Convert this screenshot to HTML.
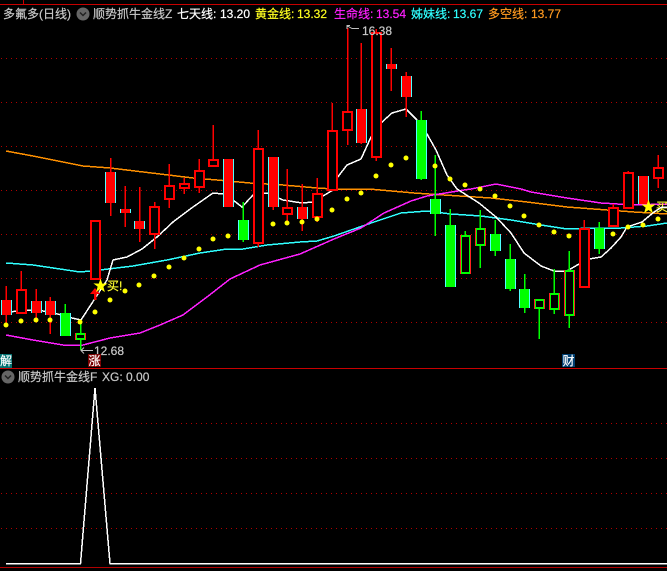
<!DOCTYPE html>
<html><head><meta charset="utf-8"><style>
html,body{margin:0;padding:0;background:#000;width:667px;height:571px;overflow:hidden}
svg{display:block;position:absolute;left:0;top:0}
text{font-family:"Liberation Sans","WenQuanYi Zen Hei","Noto Sans CJK SC",sans-serif;font-size:12px;color:#c8c8c8;fill:currentColor;stroke:currentColor;stroke-width:.2}
.c{shape-rendering:crispEdges;fill:none}
.l{stroke-width:1.5}
.g{stroke:#b00000;stroke-width:1;stroke-dasharray:1 4}
</style></head><body>
<svg width="667" height="571" viewBox="0 0 667 571">
<rect width="667" height="571" fill="#000"/>
<path class="c g" d="M1 58.5H667M1 102.5H667M1 146.5H667M1 190.5H667M1 234.5H667M1 278.5H667M1 322.5H667M1 423.5H667M1 458.5H667M1 493.5H667M1 528.5H667"/>
<path class="c" stroke="#c80000" stroke-width="1" d="M0 4.5H667M23.5 0V4M0 368.5H667"/>
<path class="c" stroke="#b00000" stroke-width="1" d="M0 567.5H667"/>

<path class="c l" stroke="#ff9000" d="M6 151L33 156L83 166L110 168L160 174L193 178L217 180L250 183L283 185L317 188L334 189L369 189L414 193L444 195L491 198L527 202L567 207L607 210L634 212L667 214"/>
<path class="c l" stroke="#30ffff" d="M6 263L33 265L60 269L80 272L100 270L133 266L167 260L200 253L227 249L243 249L267 245L300 242L317 241L334 236L354 229L374 222L401 213L427 211L451 214L481 216L511 220L541 225L567 229L594 228L621 228L647 226L667 223"/>
<path class="c l" stroke="#ff20ff" d="M6 335L33 340L63 345L83 345L110 338L140 333L160 325L183 315L207 297L230 279L260 265L300 254L334 239L361 228L384 213L411 201L427 196L464 190L471 189L496 184L521 189L531 192L567 198L601 203L634 205L667 204"/>
<path class="c l" stroke="#fff" d="M11 312L21 310L36 310L50 312L65 316L72 318L81 320L107 280L113 260L127 257L142 249L157 237L173 222L193 207L213 193L223 194L233 200L242 207L253 195L267 193L283 200L302 203L313 202L333 190L337 178L347 165L361 159L371 137L382 122L392 113L406 109L417 120L427 134L436 150L447 175L457 189L479 203L496 217L511 233L524 253L541 266L554 271L567 271L579 264L589 259L601 257L611 248L621 237L627 227L642 222L654 212L662 207L667 207"/>

<path class="c" stroke="#ff0000" stroke-width="1.5" d="M6 286V327M21 271V314M36 289V322M50 297V334M110.5 158V216M125 186V227M139.5 187V242M154.5 202V249M169 164V208M184 178V194M199 159V193M213 125V166M258 130V247M273 157V210M287 169V223M302 184V231M317 178V222M332 103V190M347.5 28V145M361 43V144M376 29V161M391 48V91M406 72V117M584 220V288M613 204V226M628 171V208M658 155V188"/>
<path class="c" stroke="#00ff00" stroke-width="1.5" d="M65 304V336M80.5 322V350M243 202V242M421 111V180M435 155V236M450 209V287M465 231V273M480 210V268M495 220V256M510 244V291M524.5 274V313M539 299V339M554 269V314M569 251V328M599 222V254"/>

<path class="c" style="fill:#50ffff" d="M1 300h11v15h-11zM31 301h11v12h-11zM45 301h11v14h-11zM105 172h11v31h-11zM120 209h11v4h-11zM134 221h11v8h-11zM223 159h11v48h-11zM268 157h11v50h-11zM297 207h11v12h-11zM356 109h11v34h-11zM386 64h11v5h-11zM401 76h11v21h-11zM638 176h11v28h-11zM60 313h11v23h-11zM238 220h11v20h-11zM416 120h11v59h-11zM430 199h11v15h-11zM445 225h11v62h-11zM490 234h11v17h-11zM505 259h11v30h-11zM519 289h11v19h-11zM594 228h11v21h-11z"/>
<path class="c" style="fill:#ff0000" d="M2 300h9v15h-9zM32 301h9v12h-9zM46 301h9v14h-9zM106 172h9v31h-9zM121 209h9v4h-9zM135 221h9v8h-9zM224 159h9v48h-9zM269 157h9v50h-9zM298 207h9v12h-9zM357 109h9v34h-9zM387 64h9v5h-9zM402 76h9v21h-9zM639 176h9v28h-9z"/>
<path class="c" style="fill:#00ff00" d="M61 313h9v23h-9zM239 220h9v20h-9zM417 120h9v59h-9zM431 199h9v15h-9zM446 225h9v62h-9zM491 234h9v17h-9zM506 259h9v30h-9zM520 289h9v19h-9zM595 228h9v21h-9z"/>
<path class="c" style="fill:#000;stroke:#ff0000;stroke-width:2" d="M17 290h9v23h-9zM91 221h9v58h-9zM150 207h9v27h-9zM165 186h9v13h-9zM180 184h9v4h-9zM195 171h9v16h-9zM209 160h9v6h-9zM254 149h9v94h-9zM283 208h9v6h-9zM313 194h9v23h-9zM328 131h9v59h-9zM343 112h9v18h-9zM372 33h9v124h-9zM580 229h9v58h-9zM609 208h9v18h-9zM624 173h9v35h-9zM654 168h9v10h-9z"/>
<path class="c" style="fill:#ff2020" d="M75 333h11v7h-11zM460 235h11v39h-11zM475 228h11v18h-11zM534 299h11v10h-11zM549 293h11v17h-11zM564 270h11v46h-11z"/>
<path class="c" style="fill:#00ff00" d="M76 333h9v7h-9zM461 235h9v39h-9zM476 228h9v18h-9zM535 299h9v10h-9zM550 293h9v17h-9zM565 270h9v46h-9z"/>
<path class="c" style="fill:#000" d="M77 335h7v3h-7zM462 237h7v35h-7zM477 230h7v14h-7zM536 301h7v6h-7zM551 295h7v13h-7zM566 272h7v42h-7z"/>

<g fill="#ffff00">
<circle cx="6" cy="325" r="2.5"/><circle cx="21" cy="321" r="2.5"/><circle cx="36" cy="320" r="2.5"/><circle cx="50" cy="320" r="2.5"/><circle cx="80" cy="322" r="2.5"/><circle cx="95" cy="312" r="2.5"/><circle cx="110" cy="300" r="2.5"/><circle cx="125" cy="291" r="2.5"/><circle cx="139" cy="285" r="2.5"/><circle cx="154" cy="276" r="2.5"/><circle cx="169" cy="267" r="2.5"/><circle cx="184" cy="258" r="2.5"/><circle cx="199" cy="249" r="2.5"/><circle cx="213" cy="239" r="2.5"/><circle cx="228" cy="236" r="2.5"/><circle cx="273" cy="224" r="2.5"/><circle cx="287" cy="223" r="2.5"/><circle cx="302" cy="222" r="2.5"/><circle cx="317" cy="219" r="2.5"/><circle cx="332" cy="210" r="2.5"/><circle cx="347" cy="199" r="2.5"/><circle cx="361" cy="193" r="2.5"/><circle cx="376" cy="176" r="2.5"/><circle cx="391" cy="165" r="2.5"/><circle cx="406" cy="158" r="2.5"/><circle cx="435" cy="166" r="2.5"/><circle cx="450" cy="179" r="2.5"/><circle cx="465" cy="185" r="2.5"/><circle cx="480" cy="189" r="2.5"/><circle cx="495" cy="196" r="2.5"/><circle cx="510" cy="206" r="2.5"/><circle cx="524" cy="216" r="2.5"/><circle cx="539" cy="225" r="2.5"/><circle cx="554" cy="232" r="2.5"/><circle cx="569" cy="236" r="2.5"/><circle cx="613" cy="234" r="2.5"/><circle cx="628" cy="227" r="2.5"/><circle cx="643" cy="225" r="2.5"/><circle cx="658" cy="219" r="2.5"/>
</g>

<path fill="#ff0000" d="M95 288L100 294H96.5V300H94V294H90Z"/>
<path fill="#ffff00" d="M100.5 278.5l1.76 5.07 5.37-.25-4.28 3.25 1.52 5.5-4.37-3.07-4.41 3.07 1.56-5.5-4.28-3.25 5.37.25z"/>
<path fill="#ffff00" d="M648.5 199.5l1.76 5.07 5.37-.25-4.28 3.25 1.52 5.5-4.37-3.07-4.41 3.07 1.56-5.5-4.28-3.25 5.37.25z"/>
<text x="107" y="290" style="color:#ffff30">买!</text>
<text x="656" y="211" style="color:#ffff30">买</text>
<path class="c l" stroke="#fff" d="M654 212L662 207L667 207"/>

<circle cx="83" cy="14" r="6.5" fill="#666"/>
<path d="M80 12.5L83 15.5L86 12.5" fill="none" stroke="#222" stroke-width="1.5"/>
<circle cx="8" cy="377" r="6.5" fill="#666"/>
<path d="M5 375.5L8 378.5L11 375.5" fill="none" stroke="#222" stroke-width="1.5"/>

<text x="3" y="18">多氟多(日线)</text>
<text x="93" y="18">顺势抓牛金线Z</text>
<text x="177" y="18" style="color:#fff">七天线:</text><text x="220" y="18" style="color:#fff">13.20</text>
<text x="255" y="18" style="color:#ffff20">黄金线:</text><text x="297" y="18" style="color:#ffff20">13.32</text>
<text x="334" y="18" style="color:#ff20ff">生命线:</text><text x="376" y="18" style="color:#ff20ff">13.54</text>
<text x="411" y="18" style="color:#30ffff">姊妹线:</text><text x="453" y="18" style="color:#30ffff">13.67</text>
<text x="488" y="18" style="color:#ff9a20">多空线:</text><text x="531" y="18" style="color:#ff9a20">13.77</text>

<path d="M347 29V25.5H350M347.5 26L352 28.5H359" fill="none" stroke="#c0c0c0"/>
<text x="362" y="35">16.38</text>
<path d="M93 350.5H81M84 347.5L81 350.5L84 353.5" fill="none" stroke="#c0c0c0"/>
<text x="94" y="355">12.68</text>

<rect x="0" y="354" width="12" height="14" fill="#007070"/>
<text x="0" y="365" style="color:#fff">解</text>
<rect x="88" y="354" width="13" height="13" fill="#7a0000"/>
<text x="88.500" y="365" style="color:#fff">涨</text>
<rect x="562" y="354" width="13" height="13" fill="#003f70"/>
<text x="562.500" y="365" style="color:#fff">财</text>

<text x="18" y="381">顺势抓牛金线F</text>
<text x="102" y="381">XG: 0.00</text>

<path class="c l" stroke="#fff" d="M6 563.500H80.500L95 388L110 563.500H667"/>
</svg>
</body></html>
